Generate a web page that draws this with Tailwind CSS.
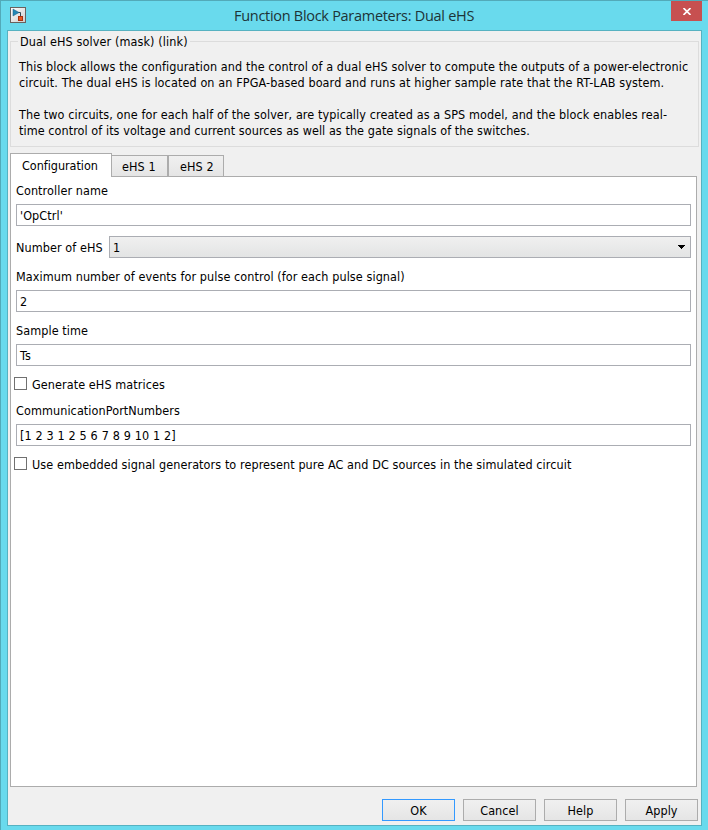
<!DOCTYPE html>
<html lang="en">
<head>
<meta charset="utf-8">
<title>Function Block Parameters: Dual eHS</title>
<script src="https://cdn.jsdelivr.net/npm/@tailwindcss/browser@4"></script>
</head>
<body class="w-[708px] h-[830px] overflow-hidden">
<div class="w-[708px] h-[830px] bg-[#69daed] border-t border-l border-[#52aab9] font-['DejaVu_Sans_Condensed','DejaVu_Sans',sans-serif] [font-stretch:condensed] text-[12.5px] leading-[16px] tracking-[0.085px] text-black pl-[6px] flex flex-col whitespace-nowrap">
  <header class="h-[29px] flex shrink-0">
    <div class="w-[16px] ml-[3px] mt-[6px]">
      <svg width="16" height="16" viewBox="0 0 16 16">
        <defs><linearGradient id="g" x1="0" y1="0" x2="1" y2="1"><stop offset="0" stop-color="#fff"/><stop offset="1" stop-color="#ccc"/></linearGradient></defs>
        <rect x=".5" y=".5" width="15" height="15" fill="url(#g)" stroke="#69625f"/>
        <path d="M8 5.500h2.500v4" fill="none" stroke="#344653"/>
        <path d="M3 2l6 3.500-6 3.500z" fill="#2387b5" stroke="#1c5e82" stroke-width=".5"/>
        <rect x="8.500" y="9.500" width="4" height="4" fill="#e65a22" stroke="#a9310e"/>
      </svg>
    </div>
    <h1 class="flex-1 pl-[208px] pt-[5px] text-[14.5px] leading-[20px] text-[#1d3337] font-['Open_Sans',sans-serif] [font-stretch:normal] tracking-[-0.29px]">Function Block Parameters: Dual eHS</h1>
    <button class="w-[31px] h-[20px] bg-[#c75050] mr-[6px] flex items-center justify-center">
      <svg width="8" height="7" viewBox="0 0 8 7" class="mt-px ml-px"><path d="M.5 0l7 7M7.500 0l-7 7" stroke="#fff" stroke-width="1.600"/></svg>
    </button>
  </header>
  <main class="w-[695px] h-[796px] shrink-0 border border-[#56b2c1] bg-[#f0f0f0] pl-[2px] flex flex-col">
    <fieldset class="mt-[10px] w-[689px] h-[106px] shrink-0 border border-[#dcdcdc] pl-[8px]">
      <div class="-mt-[8px] -ml-px h-[16px]"><span class="bg-[#f0f0f0] px-[2px] tracking-[0.115px]">Dual eHS solver (mask) (link)</span></div>
      <div class="mt-[9px]">This block allows the configuration and the control of a dual eHS solver to compute the outputs of a power-electronic</div>
      <div class="tracking-[0.11px]">circuit. The dual eHS is located on an FPGA-based board and runs at higher sample rate that the RT-LAB system.</div>
      <div class="mt-[16px]">The two circuits, one for each half of the solver, are typically created as a SPS model, and the block enables real-</div>
      <div class="tracking-[0.065px]">time control of its voltage and current sources as well as the gate signals of the switches.</div>
    </fieldset>
    <nav class="mt-[6px] h-[23px] flex items-end shrink-0">
      <div class="w-[102px] h-[24px] -mb-px z-10 bg-white border border-b-0 border-[#acacac] pl-[11px] pt-[4px] tracking-[-0.03px]">Configuration</div>
      <div class="w-[57px] h-[21px] -ml-px bg-linear-to-b from-[#f0f0f0] to-[#e5e5e5] border border-b-0 border-[#acacac] pl-[10px] pt-[3px]">eHS 1</div>
      <div class="w-[56px] h-[21px] bg-linear-to-b from-[#f0f0f0] to-[#e5e5e5] border border-b-0 border-[#acacac] pl-[11px] pt-[3px]">eHS 2</div>
    </nav>
    <section class="w-[687px] h-[611px] shrink-0 border border-[#acacac] bg-white pl-[5px]">
      <div class="mt-[6px] h-[21px]">Controller name</div>
      <div class="w-[675px] h-[22px] border border-[#abadb3] pl-[3px] pt-[3px]">'OpCtrl'</div>
      <div class="mt-[10px] h-[22px] flex items-center">
        <span class="w-[93px] pt-[2px]">Number of eHS</span>
        <div class="w-[582px] h-[22px] border border-[#abadb3] bg-linear-to-b from-[#f0f0f0] to-[#e3e4e4] pl-[3px] pr-[5px] flex items-center justify-between"><span class="pt-[2px]">1</span><svg width="7" height="4" shape-rendering="crispEdges"><path d="M0 0h7v1h-1v1h-1v1h-1v1h-1v-1h-1v-1h-1v-1h-1z"/></svg></div>
      </div>
      <div class="mt-[11px] h-[21px]">Maximum number of events for pulse control (for each pulse signal)</div>
      <div class="w-[675px] h-[22px] border border-[#abadb3] pl-[3px] pt-[3px]">2</div>
      <div class="mt-[11px] h-[21px]">Sample time</div>
      <div class="w-[675px] h-[22px] border border-[#abadb3] pl-[3px] pt-[3px]">Ts</div>
      <div class="mt-[10px] -ml-[2px] h-[16px] flex"><i class="w-[13px] h-[13px] mt-px mr-[5px] border border-[#707070]"></i><span class="pt-px">Generate eHS matrices</span></div>
      <div class="mt-[11px] h-[21px]">CommunicationPortNumbers</div>
      <div class="w-[675px] h-[22px] border border-[#abadb3] pl-[3px] pt-[3px] tracking-[0.145px]">[1 2 3 1 2 5 6 7 8 9 10 1 2]</div>
      <div class="mt-[10px] -ml-[2px] h-[16px] flex"><i class="w-[13px] h-[13px] mt-px mr-[5px] border border-[#707070]"></i><span class="pt-px">Use embedded signal generators to represent pure AC and DC sources in the simulated circuit</span></div>
    </section>
    <footer class="mt-[12px] pl-[372px] flex gap-[8px]">
      <button class="w-[73px] h-[22px] pt-[2px] border border-[#3399ff] bg-linear-to-b from-[#f0f0f0] to-[#e5e5e5]">OK</button>
      <button class="w-[73px] h-[22px] pt-[2px] border border-[#acacac] bg-linear-to-b from-[#f0f0f0] to-[#e5e5e5]">Cancel</button>
      <button class="w-[73px] h-[22px] pt-[2px] border border-[#acacac] bg-linear-to-b from-[#f0f0f0] to-[#e5e5e5]">Help</button>
      <button class="w-[73px] h-[22px] pt-[2px] border border-[#acacac] bg-linear-to-b from-[#f0f0f0] to-[#e5e5e5]">Apply</button>
    </footer>
  </main>
</div>
</body>
</html>
